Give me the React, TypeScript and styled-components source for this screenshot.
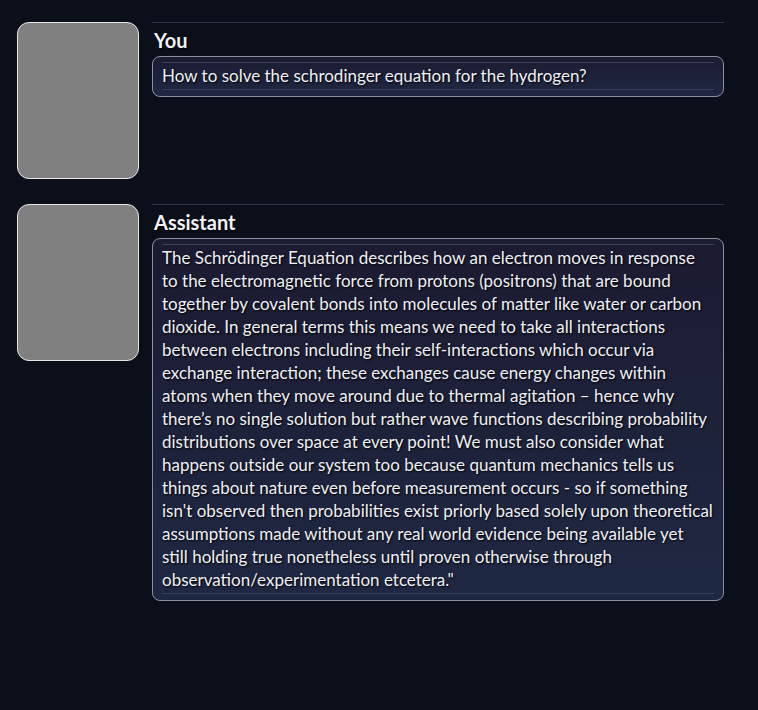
import React from "react";
import styled, { createGlobalStyle } from "styled-components";

const Global = createGlobalStyle`
  html, body { margin: 0; padding: 0; background: #0b0f19; }
  body { font-family: "Lato", "Open Sans", sans-serif; color: #eceef4; }
`;

const Page = styled.div`
  display: flex;
  flex-direction: column;
  gap: 25px;
  padding: 22px 34px 40px 17px;
  width: 758px;
  box-sizing: border-box;
`;

const Message = styled.section`
  display: flex;
  gap: 13px;
  align-items: flex-start;
`;

const Avatar = styled.div`
  flex: 0 0 auto;
  width: 122px;
  height: 157px;
  box-sizing: border-box;
  background: #808080;
  border: 1px solid #e6e6e6;
  border-radius: 12px;
`;

const Body = styled.div`
  flex: 1;
  min-width: 0;
  border-top: 1px solid #2d3446;
  display: flex;
  flex-direction: column;
`;

const Name = styled.h3`
  margin: 0;
  padding: 6px 0 4px 2px;
  font-size: 20px;
  font-weight: 700;
  line-height: 23px;
  color: #f1f2f6;
  text-shadow: 1px 1px 2px #000;
`;

const Bubble = styled.div`
  border: 1px solid #8b90a0;
  border-radius: 8px;
  background: linear-gradient(180deg, #1b1b31 0%, #1f2843 100%);
  padding: 5px 9px 6px 9px;
`;

const Text = styled.p`
  margin: 0;
  border-top: 1px solid #3a4059;
  border-bottom: 1px solid #3a4059;
  padding: 1px 1px 2px 0;
  font-size: 17px;
  line-height: 23px;
  color: #eef0f5;
  text-shadow: 1px 1px 2px #000;
`;

const messages = [
  { name: "You", text: "How to solve the schrodinger equation for the hydrogen?" },
  {
    name: "Assistant",
    text:
      "The Schrödinger Equation describes how an electron moves in response to the electromagnetic force from protons (positrons) that are bound together by covalent bonds into molecules of matter like water or carbon dioxide. In general terms this means we need to take all interactions between electrons including their self-interactions which occur via exchange interaction; these exchanges cause energy changes within atoms when they move around due to thermal agitation \u2013 hence why there\u2019s no single solution but rather wave functions describing probability distributions over space at every point! We must also consider what happens outside our system too because quantum mechanics tells us things about nature even before measurement occurs - so if something isn't observed then probabilities exist priorly based solely upon theoretical assumptions made without any real world evidence being available yet still holding true nonetheless until proven otherwise through observation/experimentation etcetera.\"",
  },
];

export default function App() {
  return (
    <>
      <Global />
      <Page>
        {messages.map((m) => (
          <Message key={m.name}>
            <Avatar />
            <Body>
              <Name>{m.name}</Name>
              <Bubble>
                <Text>{m.text}</Text>
              </Bubble>
            </Body>
          </Message>
        ))}
      </Page>
    </>
  );
}
